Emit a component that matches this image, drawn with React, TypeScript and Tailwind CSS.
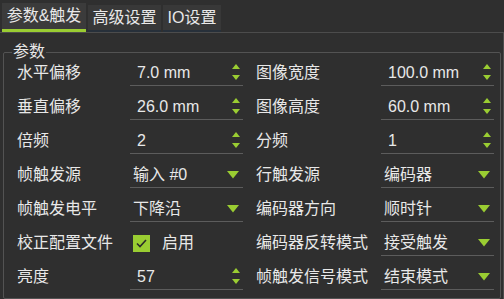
import React from "react";

const GREEN = "#9acd32";

function SpinArrows() {
  return (
    <svg width="8" height="17" viewBox="0 0 8 17" className="shrink-0">
      <polygon points="4,0 8,5 0,5" fill={GREEN} />
      <polygon points="0,11 8,11 4,16" fill={GREEN} />
    </svg>
  );
}

function ComboArrow() {
  return (
    <svg width="12" height="8" viewBox="0 0 12 8" className="shrink-0">
      <polygon points="0,0 12,0 6,7.5" fill={GREEN} />
    </svg>
  );
}

type Field =
  | { kind: "spin"; value: string }
  | { kind: "combo"; value: string }
  | { kind: "check"; value: string };

function FieldBox({ f }: { f: Field }) {
  if (f.kind === "check") {
    return (
      <div className="w-[113px] h-[26px] flex items-center pl-[3px]">
        <div className="w-[17px] h-[17px] bg-[#9acd32] flex items-center justify-center">
          <svg width="13" height="13" viewBox="0 0 13 13">
            <polyline points="2,6.5 5,9.5 11,3" fill="none" stroke="#2a2a2a" strokeWidth="1.6" />
          </svg>
        </div>
        <span className="ml-[12px]">{f.value}</span>
      </div>
    );
  }
  if (f.kind === "spin") {
    return (
      <div className="w-[113px] h-[26px] border-b border-[#5c5c5c] flex items-center justify-between pl-[7px] pr-[3px]">
        <span>{f.value}</span>
        <SpinArrows />
      </div>
    );
  }
  return (
    <div className="w-[113px] h-[26px] border-b border-[#5c5c5c] flex items-center justify-between pl-[3px] pr-[4px]">
      <span>{f.value}</span>
      <ComboArrow />
    </div>
  );
}

const rows: [string, Field, string, Field][] = [
  ["水平偏移", { kind: "spin", value: "7.0 mm" }, "图像宽度", { kind: "spin", value: "100.0 mm" }],
  ["垂直偏移", { kind: "spin", value: "26.0 mm" }, "图像高度", { kind: "spin", value: "60.0 mm" }],
  ["倍频", { kind: "spin", value: "2" }, "分频", { kind: "spin", value: "1" }],
  ["帧触发源", { kind: "combo", value: "输入 #0" }, "行触发源", { kind: "combo", value: "编码器" }],
  ["帧触发电平", { kind: "combo", value: "下降沿" }, "编码器方向", { kind: "combo", value: "顺时针" }],
  ["校正配置文件", { kind: "check", value: "启用" }, "编码器反转模式", { kind: "combo", value: "接受触发" }],
  ["亮度", { kind: "spin", value: "57" }, "帧触发信号模式", { kind: "combo", value: "结束模式" }],
];

export default function App() {
  return (
    <div className="w-[504px] h-[299px] overflow-hidden bg-[#2f2f2f] text-[#e8e8e8] text-[16px] font-['Liberation_Sans','Noto_Sans_CJK_SC',sans-serif]">
      <div className="flex items-end h-[32px] pl-[2px] gap-[2px]">
        <div className="w-[84px] h-[29px] bg-[#3b3b3b] border-b-[3px] border-[#9acd32] flex items-center justify-center">
          参数&amp;触发
        </div>
        <div className="w-[73px] h-[27px] bg-[#383838] border-b-2 border-[#27303a] flex items-center justify-center">
          高级设置
        </div>
        <div className="w-[58px] h-[27px] bg-[#383838] border-b-2 border-[#27303a] flex items-center justify-center">
          IO设置
        </div>
      </div>
      <div className="h-[267px] border-t border-r border-[#4c4c4c] pt-[19px] pl-[3px] pr-[2px]">
        <div className="relative border border-[#535353] rounded-[2px] pt-[7px] pb-[8px] pl-[13px]">
          <span className="absolute -top-[12px] left-[8px] px-[1px] bg-[#2f2f2f] leading-[22px]">参数</span>
          <div className="flex flex-col gap-[8px]">
            {rows.map(([l1, f1, l2, f2]) => (
              <div key={l1} className="flex items-center h-[26px]">
                <div className="w-[113px]">{l1}</div>
                <FieldBox f={f1} />
                <div className="w-[13px]" />
                <div className="w-[125px]">{l2}</div>
                <FieldBox f={f2} />
              </div>
            ))}
          </div>
        </div>
      </div>
    </div>
  );
}
